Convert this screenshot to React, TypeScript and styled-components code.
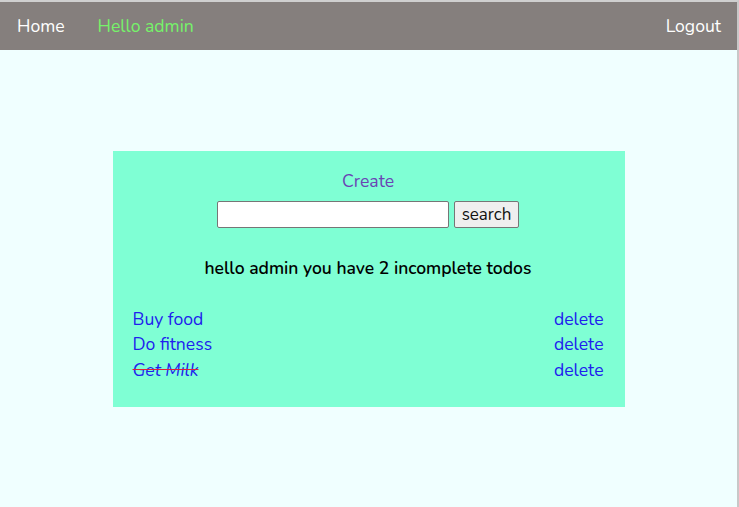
import React from "react";
import styled, { createGlobalStyle } from "styled-components";

const Global = createGlobalStyle`
  html, body { margin: 0; padding: 0; }
  body {
    background: #f0ffff;
    font-family: "Nunito", "Lato", "Noto Sans", sans-serif;
  }
`;

const Frame = styled.div`
  min-height: 507px;
  box-sizing: border-box;
  border-top: 2px solid #cfcfcf;
  border-right: 2px solid #c8c8c8;
  background: #f0ffff;
`;

const Nav = styled.nav`
  height: 48px;
  background: #857f7d;
  display: flex;
  align-items: center;
  padding: 0 16px 0 17px;
  font-size: 17.6px;
`;

const NavLink = styled.a<{ $accent?: boolean; $push?: boolean }>`
  color: ${(p) => (p.$accent ? "#76f36a" : "#ffffff")};
  text-decoration: none;
  margin-right: ${(p) => (p.$push ? "0" : "33px")};
  margin-left: ${(p) => (p.$push ? "auto" : "0")};
  cursor: pointer;
`;

const Main = styled.main`
  display: flex;
  justify-content: center;
  padding-top: 101px;
`;

const Card = styled.section`
  width: 512px;
  box-sizing: border-box;
  background: #7fffd4;
  padding: 19px 21px 24px 20px;
  display: flex;
  flex-direction: column;
  align-items: stretch;
`;

const CreateLink = styled.a`
  align-self: center;
  color: #6a44b4;
  font-size: 17.6px;
  line-height: 22px;
  text-decoration: none;
  cursor: pointer;
`;

const SearchRow = styled.form`
  display: flex;
  justify-content: center;
  gap: 5px;
  margin-top: 9px;
`;

const SearchInput = styled.input`
  width: 232px;
  height: 27px;
  box-sizing: border-box;
  border: 1px solid #767676;
  border-radius: 2px;
  background: #fff;
  padding: 1px 4px;
  font-size: 15px;
`;

const SearchButton = styled.button`
  height: 27px;
  box-sizing: border-box;
  border: 1px solid #767676;
  border-radius: 2px;
  background: #efefef;
  color: #111;
  font-family: inherit;
  font-size: 17px;
  padding: 0 7px;
  line-height: 1;
`;

const Summary = styled.h3`
  margin: 28px 0 0;
  text-align: center;
  font-size: 17.5px;
  font-weight: 600;
  line-height: 24px;
  color: #000;
`;

const TodoList = styled.ul`
  list-style: none;
  margin: 26px 0 0;
  padding: 0;
  display: flex;
  flex-direction: column;
`;

const TodoRow = styled.li`
  display: flex;
  justify-content: space-between;
  align-items: center;
  height: 25.5px;
  font-size: 17.6px;
`;

const TodoText = styled.a<{ $done?: boolean }>`
  color: #2020ee;
  text-decoration: ${(p) => (p.$done ? "line-through" : "none")};
  text-decoration-color: #e0203a;
  font-style: ${(p) => (p.$done ? "italic" : "normal")};
  cursor: pointer;
`;

const DeleteLink = styled.a`
  color: #2020ee;
  cursor: pointer;
  text-decoration: none;
`;

const todos = [
  { text: "Buy food", done: false },
  { text: "Do fitness", done: false },
  { text: "Get Milk", done: true },
];

export default function App() {
  const incomplete = todos.filter((t) => !t.done).length;
  return (
    <>
      <Global />
      <Frame>
        <Nav>
          <NavLink>Home</NavLink>
          <NavLink $accent>Hello admin</NavLink>
          <NavLink $push>Logout</NavLink>
        </Nav>
        <Main>
          <Card>
            <CreateLink>Create</CreateLink>
            <SearchRow onSubmit={(e) => e.preventDefault()}>
              <SearchInput type="text" />
              <SearchButton type="submit">search</SearchButton>
            </SearchRow>
            <Summary>hello admin you have {incomplete} incomplete todos</Summary>
            <TodoList>
              {todos.map((t) => (
                <TodoRow key={t.text}>
                  <TodoText $done={t.done}>{t.text}</TodoText>
                  <DeleteLink>delete</DeleteLink>
                </TodoRow>
              ))}
            </TodoList>
          </Card>
        </Main>
      </Frame>
    </>
  );
}
